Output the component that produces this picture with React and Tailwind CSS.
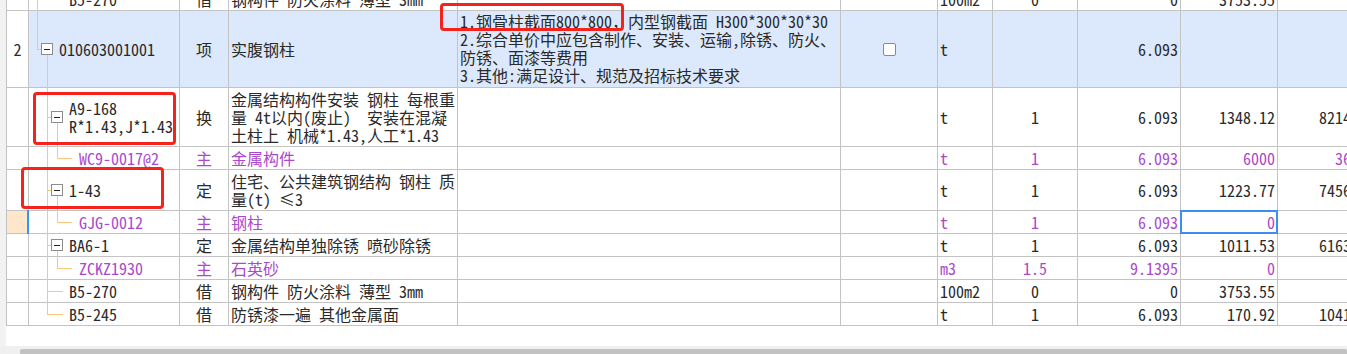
import React from 'react';

const W = ['w-[22px]', 'w-[151px]', 'w-[49px]', 'w-[229px]', 'w-[383px]', 'w-[97px]', 'w-[55px]', 'w-[85px]', 'w-[103px]', 'w-[97px]', 'w-[101px]'];

const H = { 23: 'h-[23px]', 41: 'h-[41px]', 59: 'h-[59px]', 77: 'h-[77px]' };

const rows = [
    { h: 23, first: true, tree: { l1: 'pass', kind: 'last2' }, lvl: 2, code: ['B5-270'], type: '借', name: ['钢构件 防火涂料 薄型 3mm'], unit: '100m2', qty: '0', amount: '0', price: '3753.55', total: '' },
    { h: 77, list: true, num: '2', tree: { l1: 'end', kind: 'box1' }, lvl: 1, code: ['010603001001'], type: '项', name: ['实腹钢柱'], desc: ['1.钢骨柱截面800*800，内型钢截面 H300*300*30*30', '2.综合单价中应包含制作、安装、运输,除锈、防火、', '防锈、面漆等费用', '3.其他:满足设计、规范及招标技术要求'], check: true, unit: 't', qty: '', amount: '6.093', price: '', total: '' },
    { h: 59, tree: { kind: 'box2' }, lvl: 2, code: ['A9-168', 'R*1.43,J*1.43'], type: '换', name: ['金属结构构件安装 钢柱 每根重', '量 4t以内(废止)  安装在混凝', '土柱上 机械*1.43,人工*1.43'], unit: 't', qty: '1', amount: '6.093', price: '1348.12', total: '8214.09' },
    { h: 23, purple: true, tree: { kind: 'leaf3' }, lvl: 3, code: ['WC9-0017@2'], type: '主', name: ['金属构件'], unit: 't', qty: '1', amount: '6.093', price: '6000', total: '36558' },
    { h: 41, tree: { kind: 'box2' }, lvl: 2, code: ['1-43'], type: '定', name: ['住宅、公共建筑钢结构 钢柱 质', '量(t) ≤3'], unit: 't', qty: '1', amount: '6.093', price: '1223.77', total: '7456.43' },
    { h: 23, purple: true, current: true, tree: { kind: 'leaf3' }, lvl: 3, code: ['GJG-0012'], type: '主', name: ['钢柱'], unit: 't', qty: '1', amount: '6.093', price: '0', total: '', selected: true },
    { h: 23, tree: { kind: 'box2' }, lvl: 2, code: ['BA6-1'], type: '定', name: ['金属结构单独除锈 喷砂除锈'], unit: 't', qty: '1', amount: '6.093', price: '1011.53', total: '6163.25' },
    { h: 23, purple: true, tree: { kind: 'leaf3' }, lvl: 3, code: ['ZCKZ1930'], type: '主', name: ['石英砂'], unit: 'm3', qty: '1.5', amount: '9.1395', price: '0', total: '' },
    { h: 23, tree: { kind: 'leaf2' }, lvl: 2, code: ['B5-270'], type: '借', name: ['钢构件 防火涂料 薄型 3mm'], unit: '100m2', qty: '0', amount: '0', price: '3753.55', total: '' },
    { h: 23, tree: { kind: 'last2' }, lvl: 2, code: ['B5-245'], type: '借', name: ['防锈漆一遍 其他金属面'], unit: 't', qty: '1', amount: '6.093', price: '170.92', total: '1041.42' },
];

const line = 'absolute bg-[#fbc67c]';

function MinusBox({ x }) {
    return (
        <span className={`absolute top-1/2 -translate-y-1/2 ${x} w-[12px] h-[12px] border border-[#8c8c8c] bg-white flex items-center justify-center`}>
            <span className="w-[6px] h-px bg-[#222]" />
        </span>
    );
}

function Tree({ t }) {
    const k = t.kind;
    return (
        <>
            {t.l1 === 'pass' && <span className={`${line} left-[8px] w-px -top-px -bottom-px`} />}
            {t.l1 === 'end' && (
                <>
                    <span className={`${line} left-[8px] w-px -top-px h-[calc(50%+1px)]`} />
                    <span className={`${line} left-[8px] w-[4px] h-px top-1/2`} />
                </>
            )}
            {k === 'box1' && (
                <>
                    <MinusBox x="left-[12px]" />
                    <span className={`${line} left-[18px] w-px top-[calc(50%+6px)] -bottom-px`} />
                </>
            )}
            {(k === 'box2' || k === 'leaf3' || k === 'leaf2') && <span className={`${line} left-[18px] w-px -top-px -bottom-px`} />}
            {k === 'last2' && <span className={`${line} left-[18px] w-px -top-px h-[calc(50%+1px)]`} />}
            {(k === 'leaf2' || k === 'last2') && <span className={`${line} left-[18px] w-[16px] h-px top-1/2`} />}
            {k === 'box2' && (
                <>
                    <span className={`${line} left-[18px] w-[4px] h-px top-1/2`} />
                    <MinusBox x="left-[22px]" />
                    <span className={`${line} left-[28px] w-px top-[calc(50%+6px)] -bottom-px`} />
                </>
            )}
            {k === 'leaf3' && (
                <>
                    <span className={`${line} left-[28px] w-px -top-px h-[calc(50%+1px)]`} />
                    <span className={`${line} left-[28px] w-[15px] h-px top-1/2`} />
                </>
            )}
        </>
    );
}

const padByLevel = { 1: 'pl-[30px]', 2: 'pl-[40px]', 3: 'pl-[50px]' };

function Row({ r }) {
    const bg = r.list ? 'bg-[#dce8fb]' : '';
    const color = r.purple ? 'text-[#ac48cc]' : '';
    const cell = `shrink-0 border-r border-[#c3c3c3] flex items-center`;
    return (
        <div className={`flex shrink-0 border-b border-[#c3c3c3] ${H[r.h]} ${r.first ? '-mt-[12px]' : ''} ${color}`}>
            <div className={`${cell} ${W[0]} justify-center text-[#2a2a2a] relative ${r.current ? 'bg-[#fde6c9]' : ''}`}>
                {r.num}
                {r.current && <span className="absolute -right-px -top-px -bottom-px w-[2px] bg-[#3794ff]" />}
            </div>
            <div className={`${cell} ${W[1]} ${bg} relative ${padByLevel[r.lvl]}`}>
                <Tree t={r.tree} />
                <div className="whitespace-pre">
                    {r.code.map((c, i) => <div key={i}>{c}</div>)}
                </div>
            </div>
            <div className={`${cell} ${W[2]} ${bg} justify-center`}>{r.type}</div>
            <div className={`${cell} ${W[3]} ${bg} pl-[2px]`}>
                <div className="whitespace-pre">
                    {r.name.map((c, i) => <div key={i}>{c}</div>)}
                </div>
            </div>
            <div className={`${cell} ${W[4]} ${bg} pl-[2px] !items-start pt-[1px]`}>
                {r.desc && (
                    <div className="whitespace-pre">
                        {r.desc.map((c, i) => <div key={i}>{c}</div>)}
                    </div>
                )}
            </div>
            <div className={`${cell} ${W[5]} ${bg} justify-center`}>
                {r.check && <span className="w-[13px] h-[13px] border border-[#8a8a8a] rounded-[2px] bg-white" />}
            </div>
            <div className={`${cell} ${W[6]} ${bg} pl-[2px]`}>{r.unit}</div>
            <div className={`${cell} ${W[7]} ${bg} justify-center`}>{r.qty}</div>
            <div className={`${cell} ${W[8]} ${bg} justify-end pr-[2px]`}>{r.amount}</div>
            <div className={`${cell} ${W[9]} ${bg} justify-end pr-[2px] relative`}>
                {r.price}
                {r.selected && <span className="absolute -inset-px border-2 border-[#3d8ef2]" />}
            </div>
            <div className={`${cell} ${W[10]} ${bg} justify-end pr-[3px]`}>{r.total}</div>
        </div>
    );
}

export default function App() {
    return (
        <div className="w-[1347px] h-[354px] overflow-hidden bg-white flex flex-col font-['Noto_Sans_Mono_CJK_SC','Noto_Sans_CJK_SC',monospace] text-[16px] leading-[18px] text-[#2a2a2a]">
            {/* grid area */}
            <div className="relative h-[346px] flex overflow-hidden shrink-0">
                <div className="w-[6px] shrink-0 bg-[#f2f2f2]" />
                <div className="flex flex-col">
                    <div className="flex flex-col border-l border-[#c3c3c3]">
                        {rows.map((r, i) => <Row key={i} r={r} />)}
                    </div>
                </div>

                {/* red annotation boxes */}
                <div className="absolute left-[440px] top-[3px] w-[184px] h-[28px] border-[3px] border-[#f5231b] rounded-[4px]" />
                <div className="absolute left-[33px] top-[92px] w-[143px] h-[53px] border-[3px] border-[#f5231b] rounded-[4px]" />
                <div className="absolute left-[21px] top-[167px] w-[143px] h-[42px] border-[3px] border-[#f5231b] rounded-[4px]" />
            </div>

            {/* horizontal scrollbar */}
            <div className="h-[8px] bg-[#f0f0f0] flex items-end pl-[20px]">
                <div className="h-[5px] flex-1 bg-[#c2c2c2] rounded-t-[2px]" />
            </div>
        </div>
    );
}
